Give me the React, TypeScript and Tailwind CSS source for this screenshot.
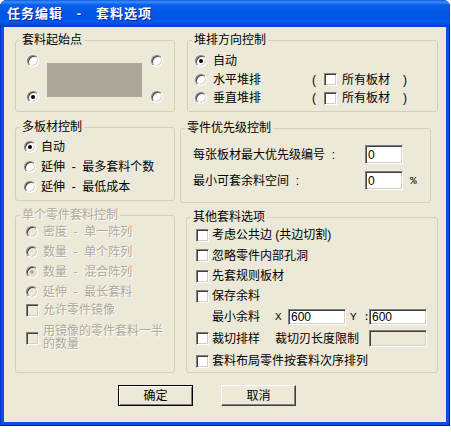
import type { ReactNode } from 'react'

const dim = 'text-[#ACA899] [text-shadow:1px_1px_0_#fff]'
const sunken =
  'border border-t-[#808080] border-l-[#808080] border-b-white border-r-white shadow-[inset_1px_1px_0_#404040,inset_-1px_-1px_0_#D4D0C8]'

function Radio({ checked = false, disabled = false }: { checked?: boolean; disabled?: boolean }) {
  return (
    <span
      className={`flex h-[12px] w-[12px] shrink-0 items-center justify-center rounded-full ${sunken} ${disabled ? 'bg-[#ECE9D8]' : 'bg-white'}`}
    >
      {checked && <span className={`h-[4px] w-[4px] rounded-full ${disabled ? 'bg-[#ACA899]' : 'bg-black'}`} />}
    </span>
  )
}

function Check({ disabled = false }: { disabled?: boolean }) {
  return <span className={`block h-[13px] w-[13px] shrink-0 ${sunken} ${disabled ? 'bg-[#ECE9D8]' : 'bg-white'}`} />
}

function Field({ value = '', className = '', disabled = false }: { value?: string; className?: string; disabled?: boolean }) {
  return (
    <span className={`flex shrink-0 items-center pl-[2px] text-[12px] leading-none ${sunken} ${disabled ? 'bg-[#ECE9D8]' : 'bg-white'} ${className}`}>
      {value}
    </span>
  )
}

function Group({
  label,
  className = '',
  disabled = false,
  children,
}: {
  label: string
  className?: string
  disabled?: boolean
  children: ReactNode
}) {
  return (
    <div className={`relative shrink-0 rounded-[3px] border border-[#D0D0BF] ${className}`}>
      <span className={`absolute -top-[8px] left-[4px] bg-[#ECE9D8] px-[2px] leading-[14px] ${disabled ? dim : ''}`}>{label}</span>
      {children}
    </div>
  )
}

function RadioRow({ h, label, checked, disabled }: { h: string; label: string; checked?: boolean; disabled?: boolean }) {
  return (
    <div className={`flex items-center ${h}`}>
      <Radio checked={checked} disabled={disabled} />
      <span className={`ml-[5px] whitespace-pre leading-[14px] ${disabled ? dim : ''}`}>{label}</span>
    </div>
  )
}

function CheckRow({ h, label }: { h: string; label: string }) {
  return (
    <div className={`flex items-center ${h}`}>
      <Check />
      <span className="ml-[3px] whitespace-pre leading-[14px]">{label}</span>
    </div>
  )
}

function StackRow({ h, label }: { h: string; label: string }) {
  return (
    <div className={`flex items-center ${h}`}>
      <Radio />
      <span className="ml-[6px] w-[99px] leading-[14px]">{label}</span>
      <span className="w-[12px] leading-[14px]">(</span>
      <Check />
      <span className="ml-[5px] w-[61px] leading-[14px]">所有板材</span>
      <span className="leading-[14px]">)</span>
    </div>
  )
}

export default function App() {
  return (
    <div className="h-[432px] w-[451px] bg-white font-['Liberation_Sans','Noto_Sans_CJK_SC',sans-serif] text-[12px] text-black">
      <div className="flex h-[426px] w-[450px] flex-col rounded-t-[7px] bg-[#0B4FE4] shadow-[inset_1px_0_0_#0831D9,inset_-1px_0_0_#001EA0,inset_0_-1px_0_#001A8C]">
        <div className="flex h-[27px] shrink-0 items-center rounded-t-[7px] bg-[linear-gradient(180deg,#0A5CE6_0%,#3D8DF5_7%,#0A5EEA_18%,#0055E5_50%,#0058EE_80%,#0048DA_93%,#003CC4_100%)] pl-[7px]">
          <span className="whitespace-pre text-[13px] font-bold tracking-[1px] text-white [text-shadow:1px_1px_0_#0A1F8C]">
            任务编辑   -   套料选项
          </span>
        </div>

        <div className="mx-[4px] mb-[4px] flex-1 bg-[#ECE9D8]">
          <div className="flex pl-[11px] pt-[13px]">
            {/* left column */}
            <div className="flex w-[160px] flex-col">
              <Group label="套料起始点" className="h-[72px]">
                <div className="flex items-start pl-[11px] pt-[14px]">
                  <div className="flex flex-col gap-[24px]">
                    <Radio />
                    <Radio checked />
                  </div>
                  <div className="ml-[8px] mt-[8px] h-[34px] w-[95px] bg-[#ACA899]" />
                  <div className="ml-[9px] flex flex-col gap-[24px]">
                    <Radio />
                    <Radio />
                  </div>
                </div>
              </Group>

              <Group label="多板材控制" className="mt-[15px] h-[74px]">
                <div className="flex flex-col pl-[8px] pt-[9px]">
                  <RadioRow h="h-[20px]" label="自动" checked />
                  <RadioRow h="h-[20px]" label="延伸  -  最多套料个数" />
                  <RadioRow h="h-[20px]" label="延伸  -  最低成本" />
                </div>
              </Group>

              <Group label="单个零件套料控制" className="mt-[14px] h-[158px]" disabled>
                <div className="flex flex-col pl-[10px] pt-[6px]">
                  <RadioRow h="h-[20px]" label="密度  -  单一阵列" disabled />
                  <RadioRow h="h-[19px]" label="数量  -  单个阵列" disabled />
                  <RadioRow h="h-[21px]" label="数量  -  混合阵列" checked disabled />
                  <RadioRow h="h-[19px]" label="延伸  -  最长套料" disabled />
                  <div className="flex h-[18px] items-center">
                    <Check disabled />
                    <span className={`ml-[4px] leading-[14px] ${dim}`}>允许零件镜像</span>
                  </div>
                  <div className="mt-[6px] flex items-center">
                    <Check disabled />
                    <div className={`ml-[4px] flex flex-col leading-[13px] ${dim}`}>
                      <span>用镜像的零件套料一半</span>
                      <span>的数量</span>
                    </div>
                  </div>
                </div>
              </Group>
            </div>

            {/* right column */}
            <div className="ml-[5px] flex w-[258px] flex-col">
              <Group label="堆排方向控制" className="ml-[7px] h-[72px] w-[251px]">
                <div className="flex flex-col pl-[7px] pt-[10px]">
                  <div className="flex h-[19px] items-center">
                    <Radio checked />
                    <span className="ml-[6px] leading-[14px]">自动</span>
                  </div>
                  <StackRow h="h-[19px]" label="水平堆排" />
                  <StackRow h="h-[18px]" label="垂直堆排" />
                </div>
              </Group>

              <Group label="零件优先级控制" className="mt-[16px] h-[75px] w-[251px]">
                <div className="flex flex-col pl-[12px] pt-[16px]">
                  <div className="flex h-[19px] items-center">
                    <span className="w-[172px] whitespace-pre leading-[14px]">每张板材最大优先级编号  :</span>
                    <Field value="0" className="h-[19px] w-[38px]" />
                  </div>
                  <div className="mt-[7px] flex h-[19px] items-center">
                    <span className="w-[172px] whitespace-pre leading-[14px]">最小可套余料空间  :</span>
                    <Field value="0" className="h-[19px] w-[38px]" />
                    <span className="ml-[7px] font-['Liberation_Mono',monospace] text-[11px] leading-[14px]">%</span>
                  </div>
                </div>
              </Group>

              <Group label="其他套料选项" className="ml-[6px] mt-[14px] h-[156px] w-[252px]">
                <div className="flex flex-col pl-[9px] pt-[7px]">
                  <CheckRow h="h-[20px]" label="考虑公共边 (共边切割)" />
                  <CheckRow h="h-[21px]" label="忽略零件内部孔洞" />
                  <CheckRow h="h-[20px]" label="先套规则板材" />
                  <CheckRow h="h-[20px]" label="保存余料" />
                  <div className="flex h-[21px] items-center pl-[16px]">
                    <span className="w-[63px] leading-[14px]">最小余料</span>
                    <span className="w-[13px] font-['Liberation_Mono',monospace] text-[11px] leading-[14px]">X</span>
                    <Field value="600" className="h-[16px] w-[58px]" />
                    <span className="w-[23px] whitespace-pre pl-[4px] font-['Liberation_Mono',monospace] text-[11px] leading-[14px]">Y :</span>
                    <Field value="600" className="h-[16px] w-[58px]" />
                  </div>
                  <div className="flex h-[23px] items-center">
                    <Check />
                    <span className="ml-[3px] w-[63px] leading-[14px]">裁切排样</span>
                    <span className="w-[94px] leading-[14px]">裁切刃长度限制</span>
                    <Field className="h-[17px] w-[58px]" disabled />
                  </div>
                  <CheckRow h="h-[22px]" label="套料布局零件按套料次序排列" />
                </div>
              </Group>
            </div>
          </div>

          <div className="mt-[12px] flex gap-[28px] pl-[114px]">
            <button className="flex h-[21px] w-[75px] items-center justify-center border border-black bg-[#ECE9D8] leading-[14px] shadow-[inset_1px_1px_0_#fff,inset_-1px_-1px_0_#808080]">
              确定
            </button>
            <button className="flex h-[21px] w-[75px] items-center justify-center border border-t-white border-l-white border-b-[#404040] border-r-[#404040] bg-[#ECE9D8] leading-[14px] shadow-[inset_-1px_-1px_0_#808080]">
              取消
            </button>
          </div>
        </div>
      </div>
    </div>
  )
}
